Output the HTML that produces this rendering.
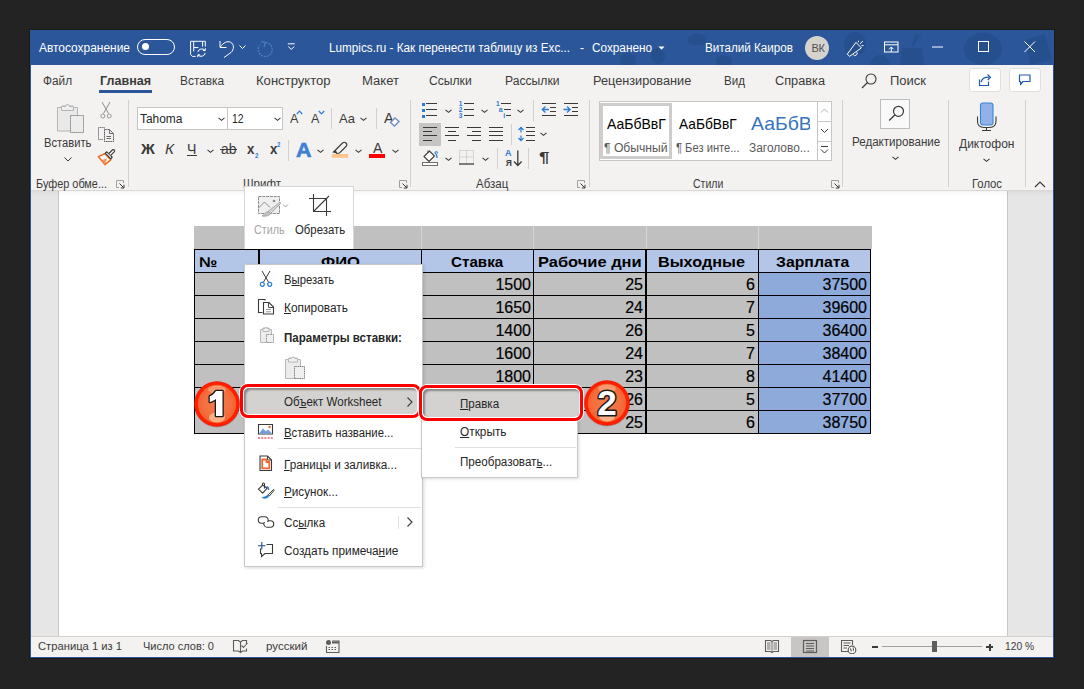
<!DOCTYPE html>
<html><head><meta charset="utf-8"><style>
html,body{margin:0;padding:0;width:1084px;height:689px;overflow:hidden;background:#232323}
body{position:relative;font-family:'Liberation Sans',sans-serif}
</style></head><body>
<div style="position:absolute;left:29px;top:29px;width:1026px;height:630px;background:#1c1b1a"></div>
<div style="position:absolute;left:30px;top:30px;width:1024px;height:628px;background:#2b579a"></div>
<div style="position:absolute;left:31px;top:65px;width:1022px;height:126px;background:#f3f2f1"></div>
<div style="position:absolute;left:31px;top:191px;width:1022px;height:445px;background:#e6e6e6"></div>
<div style="position:absolute;left:58px;top:191px;width:950px;height:445px;background:#ffffff;border-left:1px solid #c6c6c6;border-right:1px solid #c6c6c6;box-sizing:border-box"></div>
<div style="position:absolute;left:31px;top:190px;width:1022px;height:1px;background:#d9d8d7"></div>
<div style="position:absolute;left:31px;top:191px;width:1022px;height:5px;background:linear-gradient(rgba(0,0,0,0.045),rgba(0,0,0,0))"></div>
<div style="position:absolute;left:31px;top:636px;width:1022px;height:21px;background:#f3f2f1;border-top:1px solid #d2d0ce;box-sizing:border-box"></div>
<svg style="position:absolute;left:600px;top:30px;" width="454" height="35" viewBox="0 0 454 35"><g fill="#264f8e"><ellipse cx="28" cy="30" rx="8" ry="7"/><ellipse cx="58" cy="26" rx="7" ry="8"/><path d="M88 8C92 2 104 2 106 8C108 14 100 16 97 15C92 16 86 14 88 8Z"/><ellipse cx="124" cy="31" rx="8" ry="6"/><path d="M150 35V14C150 8 156 6 162 7C170 6 174 9 173 15L172 35Z" fill="none" stroke="{DC}" stroke-width="3"/><path d="M192 35V8C192 2 200 0 214 0C232 0 238 4 237 10L236 35Z" fill="none" stroke="{DC}" stroke-width="4"/><ellipse cx="255" cy="14" rx="11" ry="12"/><path d="M270 35A10 10 0 0 1 290 35Z"/><path d="M300 35L302 18H322L324 35Z M312 18L314 5L322 4" stroke="{DC}" stroke-width="2"/><ellipse cx="383" cy="19" rx="19" ry="16"/><path d="M425 10L445 4L452 30L430 35Z"/></g></svg>
<div style="position:absolute;left:39px;top:41.84px;font-family:'Liberation Sans',sans-serif;font-size:12px;line-height:12px;font-weight:400;color:#ffffff;white-space:pre;transform:scaleX(0.9947);transform-origin:0 0;">Автосохранение</div>
<div style="position:absolute;left:137px;top:39px;width:38px;height:16px;border:1px solid #fff;border-radius:9px;box-sizing:border-box"></div>
<div style="position:absolute;left:141.5px;top:43.3px;width:7.2px;height:7.2px;background:#fff;border-radius:50%"></div>
<div style="position:absolute;left:329px;top:41.84px;font-family:'Liberation Sans',sans-serif;font-size:12px;line-height:12px;font-weight:400;color:#ffffff;white-space:pre;transform:scaleX(0.9766);transform-origin:0 0;">Lumpics.ru - Как перенести таблицу из Exc...</div>
<div style="position:absolute;left:580px;top:41.84px;font-family:'Liberation Sans',sans-serif;font-size:12px;line-height:12px;font-weight:400;color:#ffffff;white-space:pre;">-</div>
<div style="position:absolute;left:592px;top:41.84px;font-family:'Liberation Sans',sans-serif;font-size:12px;line-height:12px;font-weight:400;color:#ffffff;white-space:pre;transform:scaleX(0.9811);transform-origin:0 0;">Сохранено</div>
<svg style="position:absolute;left:658px;top:46px;" width="7" height="5" viewBox="0 0 7 5"><path d="M0.5 0.5H6.5L3.5 3.8Z" fill="#fff"/></svg>
<div style="position:absolute;left:705px;top:42.34px;font-family:'Liberation Sans',sans-serif;font-size:12px;line-height:12px;font-weight:400;color:#ffffff;white-space:pre;transform:scaleX(0.9715);transform-origin:0 0;">Виталий Каиров</div>
<div style="position:absolute;left:805px;top:36px;width:24px;height:24px;background:#d6d3cf;border-radius:50%"></div>
<div style="position:absolute;left:811.5px;top:42.69px;font-family:'Liberation Sans',sans-serif;font-size:11px;line-height:11px;font-weight:400;color:#505050;white-space:pre;">В</div>
<div style="position:absolute;left:818.5px;top:42.69px;font-family:'Liberation Sans',sans-serif;font-size:11px;line-height:11px;font-weight:400;color:#505050;white-space:pre;">К</div>
<svg style="position:absolute;left:186px;top:38px;" width="24" height="22" viewBox="0 0 24 22"><path stroke="#fff" fill="none" stroke-width="1" stroke-width="1.1" d="M19.3 8.6V3.3H4.6V16.5L6.5 18.4H9.6M7.7 3.3V9.6H12.4M16.6 3.3V8.6M7.7 9.6V13.4"/><path stroke="#fff" fill="none" stroke-width="1" stroke-width="1.1" d="M11.8 14A4.2 4.2 0 0 1 19 12.3M19.3 10.2V12.6H16.9M19.2 15A4.2 4.2 0 0 1 12 17M11.8 19.2V16.8H14.2"/></svg>
<svg style="position:absolute;left:219px;top:40px;" width="16" height="18" viewBox="0 0 16 18"><path stroke="#fff" fill="none" stroke-width="1" d="M1 1V7.5H7.5"/><path stroke="#fff" fill="none" stroke-width="1" d="M1.5 7C4 2.5 8.5 0.8 11.5 2.2C15.5 4.2 15.2 9.5 12 12.5L5 17.5"/></svg>
<svg style="position:absolute;left:239px;top:45px;" width="8" height="5" viewBox="0 0 8 5"><path stroke="#fff" fill="none" stroke-width="1" d="M0.5 0.5L3.5 3.5L6.5 0.5"/></svg>
<svg style="position:absolute;left:256px;top:40px;" width="18" height="18" viewBox="0 0 18 18"><path stroke="#4f7fc6" fill="none" stroke-width="1.2" stroke-dasharray="2 1" d="M9.5 2.5A7 7 0 1 1 3.5 5.5"/><path stroke="#4f7fc6" fill="none" stroke-width="1.2" d="M5 1.5L9.5 2.5L8 7"/></svg>
<svg style="position:absolute;left:287px;top:42px;" width="9" height="9" viewBox="0 0 9 9"><path stroke="#fff" fill="none" stroke-width="1" d="M0.8 1.8H7.8M1.3 4.6L4.3 7.3L7.3 4.6"/></svg>
<svg style="position:absolute;left:845px;top:39px;" width="20" height="20" viewBox="0 0 20 20"><path stroke="#fff" fill="none" stroke-width="1" stroke-width="1.3" stroke-linejoin="round" d="M11 3.4L16.4 8.9L4.5 17.4L2.3 15.1Z"/><path stroke="#fff" fill="none" stroke-width="1" stroke-width="1.2" d="M8.2 15.6A2 2 0 0 0 11.8 13.2"/><path stroke="#fff" fill="none" stroke-width="1" stroke-width="1.1" d="M13.4 1.8V3.3M15.2 4.8L17.8 2.1M16.5 6.6H18.5"/></svg>
<svg style="position:absolute;left:884px;top:41px;" width="15" height="12" viewBox="0 0 15 12"><rect stroke="#fff" fill="none" stroke-width="1" x="0.5" y="1" width="13.5" height="10"/><path stroke="#fff" fill="none" stroke-width="1" d="M0.5 3.8H14M7.3 11V6M5 8.3L7.3 6L9.6 8.3"/></svg>
<svg style="position:absolute;left:932px;top:46px;" width="12" height="2" viewBox="0 0 12 2"><rect x="0" y="0.5" width="11" height="1" fill="#fff"/></svg>
<svg style="position:absolute;left:978px;top:41px;" width="12" height="12" viewBox="0 0 12 12"><rect stroke="#fff" fill="none" stroke-width="1" x="0.5" y="0.5" width="10" height="10"/></svg>
<svg style="position:absolute;left:1024px;top:41px;" width="12" height="12" viewBox="0 0 12 12"><path stroke="#fff" fill="none" stroke-width="1" d="M0.5 0.5L11 11M11 0.5L0.5 11"/></svg>
<div style="position:absolute;left:43.3px;top:74.72px;font-family:'Liberation Sans',sans-serif;font-size:12.5px;line-height:12.5px;font-weight:400;color:#3b3a39;white-space:pre;transform:scaleX(0.9468);transform-origin:0 0;">Файл</div>
<div style="position:absolute;left:99.7px;top:74.72px;font-family:'Liberation Sans',sans-serif;font-size:12.5px;line-height:12.5px;font-weight:700;color:#3b3a39;white-space:pre;transform:scaleX(1.0050);transform-origin:0 0;">Главная</div>
<div style="position:absolute;left:180.4px;top:74.72px;font-family:'Liberation Sans',sans-serif;font-size:12.5px;line-height:12.5px;font-weight:400;color:#3b3a39;white-space:pre;transform:scaleX(0.9512);transform-origin:0 0;">Вставка</div>
<div style="position:absolute;left:255.8px;top:74.72px;font-family:'Liberation Sans',sans-serif;font-size:12.5px;line-height:12.5px;font-weight:400;color:#3b3a39;white-space:pre;transform:scaleX(1.0466);transform-origin:0 0;">Конструктор</div>
<div style="position:absolute;left:362px;top:74.72px;font-family:'Liberation Sans',sans-serif;font-size:12.5px;line-height:12.5px;font-weight:400;color:#3b3a39;white-space:pre;transform:scaleX(1.0455);transform-origin:0 0;">Макет</div>
<div style="position:absolute;left:429px;top:74.72px;font-family:'Liberation Sans',sans-serif;font-size:12.5px;line-height:12.5px;font-weight:400;color:#3b3a39;white-space:pre;transform:scaleX(0.9701);transform-origin:0 0;">Ссылки</div>
<div style="position:absolute;left:505px;top:74.72px;font-family:'Liberation Sans',sans-serif;font-size:12.5px;line-height:12.5px;font-weight:400;color:#3b3a39;white-space:pre;transform:scaleX(0.9713);transform-origin:0 0;">Рассылки</div>
<div style="position:absolute;left:593.3px;top:74.72px;font-family:'Liberation Sans',sans-serif;font-size:12.5px;line-height:12.5px;font-weight:400;color:#3b3a39;white-space:pre;transform:scaleX(1.0183);transform-origin:0 0;">Рецензирование</div>
<div style="position:absolute;left:724px;top:74.72px;font-family:'Liberation Sans',sans-serif;font-size:12.5px;line-height:12.5px;font-weight:400;color:#3b3a39;white-space:pre;transform:scaleX(0.9282);transform-origin:0 0;">Вид</div>
<div style="position:absolute;left:775px;top:74.72px;font-family:'Liberation Sans',sans-serif;font-size:12.5px;line-height:12.5px;font-weight:400;color:#3b3a39;white-space:pre;transform:scaleX(1.0194);transform-origin:0 0;">Справка</div>
<div style="position:absolute;left:890px;top:74.72px;font-family:'Liberation Sans',sans-serif;font-size:12.5px;line-height:12.5px;font-weight:400;color:#3b3a39;white-space:pre;transform:scaleX(1.0392);transform-origin:0 0;">Поиск</div>
<div style="position:absolute;left:99px;top:90px;width:53px;height:3px;background:#2b579a"></div>
<svg style="position:absolute;left:860px;top:72px;" width="18" height="18" viewBox="0 0 18 18"><circle cx="11" cy="7" r="5" stroke="#3b3a39" stroke-width="1.1" fill="none"/><path d="M7.5 10.5L2 16" stroke="#3b3a39" stroke-width="1.2"/></svg>
<div style="position:absolute;left:969px;top:68px;width:32px;height:24px;background:#fff;border:1px solid #e1dfdd;border-radius:3px;box-sizing:border-box"></div>
<div style="position:absolute;left:1009px;top:68px;width:32px;height:24px;background:#fff;border:1px solid #e1dfdd;border-radius:3px;box-sizing:border-box"></div>
<svg style="position:absolute;left:978px;top:72px;" width="14" height="15" viewBox="0 0 14 15"><path d="M1.5 7.5V13.5H10.5V9.5" stroke="#1e5aa8" stroke-width="1.2" fill="none"/><path d="M3 10C4 6.5 7 5 11.5 5.2" stroke="#1e5aa8" stroke-width="1.2" fill="none"/><path d="M9.5 2.5L12.5 5.2L9.8 8" stroke="#1e5aa8" stroke-width="1.2" fill="none"/></svg>
<svg style="position:absolute;left:1018px;top:74px;" width="14" height="12" viewBox="0 0 14 12"><path d="M1.5 1H12V7.5H5L2.5 10.5V7.5H1.5Z" stroke="#1e5aa8" stroke-width="1.2" fill="none" stroke-linejoin="round"/></svg>
<div style="position:absolute;left:44.4px;top:137.44px;font-family:'Liberation Sans',sans-serif;font-size:12px;line-height:12px;font-weight:400;color:#3b3a39;white-space:pre;transform:scaleX(0.9317);transform-origin:0 0;">Вставить</div>
<div style="position:absolute;left:35.5px;top:177.74px;font-family:'Liberation Sans',sans-serif;font-size:12px;line-height:12px;font-weight:400;color:#3b3a39;white-space:pre;transform:scaleX(0.9073);transform-origin:0 0;">Буфер обме...</div>
<div style="position:absolute;left:243px;top:177.74px;font-family:'Liberation Sans',sans-serif;font-size:12px;line-height:12px;font-weight:400;color:#3b3a39;white-space:pre;transform:scaleX(0.9624);transform-origin:0 0;">Шрифт</div>
<div style="position:absolute;left:476px;top:177.74px;font-family:'Liberation Sans',sans-serif;font-size:12px;line-height:12px;font-weight:400;color:#3b3a39;white-space:pre;transform:scaleX(0.9593);transform-origin:0 0;">Абзац</div>
<div style="position:absolute;left:692.7px;top:177.74px;font-family:'Liberation Sans',sans-serif;font-size:12px;line-height:12px;font-weight:400;color:#3b3a39;white-space:pre;transform:scaleX(0.8763);transform-origin:0 0;">Стили</div>
<div style="position:absolute;left:851.6px;top:136.34px;font-family:'Liberation Sans',sans-serif;font-size:12px;line-height:12px;font-weight:400;color:#3b3a39;white-space:pre;transform:scaleX(0.9648);transform-origin:0 0;">Редактирование</div>
<div style="position:absolute;left:959px;top:138.34px;font-family:'Liberation Sans',sans-serif;font-size:12px;line-height:12px;font-weight:400;color:#3b3a39;white-space:pre;transform:scaleX(1.0011);transform-origin:0 0;">Диктофон</div>
<div style="position:absolute;left:972px;top:177.74px;font-family:'Liberation Sans',sans-serif;font-size:12px;line-height:12px;font-weight:400;color:#3b3a39;white-space:pre;transform:scaleX(0.9398);transform-origin:0 0;">Голос</div>
<svg style="position:absolute;left:56px;top:102px;" width="29" height="32" viewBox="0 0 29 32"><path d="M1.5 5.5H6V4H17V5.5H21.5V29H1.5Z" fill="#e9e9e9" stroke="#b4b4b4"/><path d="M5.5 8.5V4.5H9.5A2 2 0 0 1 13.5 4.5H17.5V8.5Z" fill="#efefef" stroke="#b4b4b4"/><rect x="14.5" y="13.5" width="13" height="17" fill="#ececec" stroke="#6e6e6e" stroke-dasharray="1.2 0.8"/></svg>
<svg style="position:absolute;left:100px;top:101px;" width="12" height="18" viewBox="0 0 12 18"><path d="M2 1L8.5 12.5M10 1L3.5 12.5" stroke="#8f8f8f" fill="none"/><circle cx="2.8" cy="15" r="2" fill="none" stroke="#9a9a9a"/><circle cx="9.2" cy="15" r="2" fill="none" stroke="#9a9a9a"/></svg>
<svg style="position:absolute;left:97px;top:125px;" width="18" height="18" viewBox="0 0 18 18"><path d="M7.5 3.5V2.5H1.5V14.5H6.5" fill="none" stroke="#5a5a5a" stroke-dasharray="1.2 0.8"/><path d="M7.5 4.5H12.5L16.5 8.5V16.5H7.5Z" fill="#f0f0f0" stroke="#4a4a4a" stroke-dasharray="1.2 0.6"/><path d="M12.5 4.5V8.5H16.5M9.5 11.5H14M9.5 13.5H14" fill="none" stroke="#6a6a6a"/></svg>
<svg style="position:absolute;left:94px;top:146px;" width="22" height="22" viewBox="0 0 22 22"><path d="M4.3 10.6L10.8 7.8L16.8 13.8L10.9 18.6Z" fill="#fff" stroke="#f26b21" stroke-width="1.5" stroke-linejoin="round"/><path d="M7.5 14L13 12.5L10.9 18.6Z" fill="#f7915a"/><path d="M11.2 7.2L12.8 5.8L18.2 11.2L16.8 12.8Z" fill="#fff" stroke="#3b3a39" stroke-width="1.2" stroke-linejoin="round"/><path d="M14.8 7.6L18.6 3.8A1.3 1.3 0 0 1 20.4 5.6L16.6 9.4" fill="#fff" stroke="#3b3a39" stroke-width="1.2"/></svg>
<svg style="position:absolute;left:64px;top:157px;" width="8" height="5" viewBox="0 0 8 5"><path d="M0.5 0.5L4 4L7.5 0.5" stroke="#3b3a39" fill="none"/></svg>
<svg style="position:absolute;left:116px;top:180px;" width="9" height="9" viewBox="0 0 9 9"><path d="M7.5 3V0.5H0.5V7.5H3" fill="none" stroke="#a19f9d" stroke-width="1"/><path d="M3.5 3.5L8 8M4.8 8H8V4.8" fill="none" stroke="#3b3a39"/></svg>
<div style="position:absolute;left:137px;top:107px;width:91px;height:23px;background:#fff;border:1px solid #c8c6c4;box-sizing:border-box"></div>
<div style="position:absolute;left:227px;top:107px;width:56px;height:23px;background:#fff;border:1px solid #c8c6c4;box-sizing:border-box"></div>
<div style="position:absolute;left:140px;top:112.74px;font-family:'Liberation Sans',sans-serif;font-size:12px;line-height:12px;font-weight:400;color:#262626;white-space:pre;transform:scaleX(0.9929);transform-origin:0 0;">Tahoma</div>
<div style="position:absolute;left:231.5px;top:112.74px;font-family:'Liberation Sans',sans-serif;font-size:12px;line-height:12px;font-weight:400;color:#262626;white-space:pre;transform:scaleX(0.8608);transform-origin:0 0;">12</div>
<svg style="position:absolute;left:218px;top:117px;" width="7" height="5" viewBox="0 0 7 5"><path d="M0.5 0.8L3.5 3.3L6.5 0.8" stroke="#3b3a39" fill="none" stroke-width="1.1"/></svg>
<svg style="position:absolute;left:273.5px;top:117px;" width="7" height="5" viewBox="0 0 7 5"><path d="M0.5 0.8L3.5 3.3L6.5 0.8" stroke="#3b3a39" fill="none" stroke-width="1.1"/></svg>
<div style="position:absolute;left:289.6px;top:111.80px;font-family:'Liberation Sans',sans-serif;font-size:13px;line-height:13px;font-weight:400;color:#3b3a39;white-space:pre;transform:scaleX(0.9686);transform-origin:0 0;">A</div>
<svg style="position:absolute;left:296px;top:110px;" width="7" height="5" viewBox="0 0 7 5"><path d="M0.8 4L3.5 1.2L6.2 4" stroke="#2b7cd3" fill="none" stroke-width="1.2"/></svg>
<div style="position:absolute;left:311.3px;top:111.80px;font-family:'Liberation Sans',sans-serif;font-size:13px;line-height:13px;font-weight:400;color:#3b3a39;white-space:pre;transform:scaleX(0.9686);transform-origin:0 0;">A</div>
<svg style="position:absolute;left:318px;top:110px;" width="7" height="5" viewBox="0 0 7 5"><path d="M0.8 1L3.5 3.8L6.2 1" stroke="#2b7cd3" fill="none" stroke-width="1.2"/></svg>
<div style="position:absolute;left:331px;top:108px;width:1px;height:21px;background:#d2d0ce"></div>
<div style="position:absolute;left:339.2px;top:111.80px;font-family:'Liberation Sans',sans-serif;font-size:13px;line-height:13px;font-weight:400;color:#3b3a39;white-space:pre;transform:scaleX(0.9996);transform-origin:0 0;">Aa</div>
<svg style="position:absolute;left:359.5px;top:116.5px;" width="7" height="5" viewBox="0 0 7 5"><path d="M0.5 0.8L3.5 3.3L6.5 0.8" stroke="#3b3a39" fill="none" stroke-width="1.1"/></svg>
<div style="position:absolute;left:376px;top:108px;width:1px;height:21px;background:#d2d0ce"></div>
<div style="position:absolute;left:384.2px;top:110.53px;font-family:'Liberation Sans',sans-serif;font-size:14.5px;line-height:14.5px;font-weight:400;color:#3b3a39;white-space:pre;transform:scaleX(0.9926);transform-origin:0 0;">A</div>
<svg style="position:absolute;left:389px;top:116px;" width="12" height="11" viewBox="0 0 12 11"><path d="M1.5 6.5L6 2L10 5.5L5.5 10Z" fill="#fff" stroke="#6d8fc4" stroke-width="1.4"/></svg>
<div style="position:absolute;left:141px;top:141.20px;font-family:'Liberation Sans',sans-serif;font-size:15px;line-height:15px;font-weight:700;color:#3b3a39;white-space:pre;transform:scaleX(1.0175);transform-origin:0 0;">Ж</div>
<div style="position:absolute;left:165.4px;top:141.20px;font-family:'Liberation Sans',sans-serif;font-size:15px;line-height:15px;font-weight:400;color:#3b3a39;white-space:pre;transform:scaleX(1.0171);transform-origin:0 0;font-style:italic">К</div>
<div style="position:absolute;left:187.3px;top:142.05px;font-family:'Liberation Sans',sans-serif;font-size:14px;line-height:14px;font-weight:400;color:#3b3a39;white-space:pre;transform:scaleX(1.0060);transform-origin:0 0;">Ч</div>
<div style="position:absolute;left:187px;top:155px;width:10px;height:1.2px;background:#3b3a39"></div>
<svg style="position:absolute;left:206.5px;top:148.5px;" width="7" height="5" viewBox="0 0 7 5"><path d="M0.5 0.8L3.5 3.3L6.5 0.8" stroke="#3b3a39" fill="none" stroke-width="1.1"/></svg>
<div style="position:absolute;left:221.2px;top:142.05px;font-family:'Liberation Sans',sans-serif;font-size:14px;line-height:14px;font-weight:400;color:#3b3a39;white-space:pre;transform:scaleX(0.9886);transform-origin:0 0;">ab</div>
<div style="position:absolute;left:220px;top:149px;width:17px;height:1.2px;background:#3b3a39"></div>
<div style="position:absolute;left:247.3px;top:142.05px;font-family:'Liberation Sans',sans-serif;font-size:14px;line-height:14px;font-weight:700;color:#3b3a39;white-space:pre;transform:scaleX(0.9491);transform-origin:0 0;">x</div>
<div style="position:absolute;left:255.2px;top:151.97px;font-family:'Liberation Sans',sans-serif;font-size:7px;line-height:7px;font-weight:700;color:#2b7cd3;white-space:pre;transform:scaleX(0.8704);transform-origin:0 0;">2</div>
<div style="position:absolute;left:269.5px;top:142.05px;font-family:'Liberation Sans',sans-serif;font-size:14px;line-height:14px;font-weight:700;color:#3b3a39;white-space:pre;transform:scaleX(0.9491);transform-origin:0 0;">x</div>
<div style="position:absolute;left:276.9px;top:141.07px;font-family:'Liberation Sans',sans-serif;font-size:7px;line-height:7px;font-weight:700;color:#2b7cd3;white-space:pre;transform:scaleX(0.8704);transform-origin:0 0;">2</div>
<div style="position:absolute;left:288px;top:140px;width:1px;height:21px;background:#d2d0ce"></div>
<div style="position:absolute;left:296.1px;top:139.57px;font-family:'Liberation Sans',sans-serif;font-size:20px;line-height:20px;font-weight:700;color:#3d80d6;white-space:pre;transform:scaleX(1.0724);transform-origin:0 0;-webkit-text-stroke:0.6px #3d80d6">A</div>
<svg style="position:absolute;left:316.5px;top:148.8px;" width="7" height="5" viewBox="0 0 7 5"><path d="M0.5 0.8L3.5 3.3L6.5 0.8" stroke="#3b3a39" fill="none" stroke-width="1.1"/></svg>
<svg style="position:absolute;left:331px;top:141px;" width="18" height="17" viewBox="0 0 18 17"><path d="M2.5 11L5 8.5L11.5 2C12.5 1 14 1 15 2C16 3 16 4.5 15 5.5L8.5 12L6 12.5L4.5 11Z" fill="none" stroke="#3b3a39" stroke-width="1.1"/><path d="M5 9L2.5 11.5L6 12.5Z" fill="#3b3a39"/><rect x="0.8" y="13" width="16.3" height="3.8" fill="#fcc38a"/></svg>
<svg style="position:absolute;left:354.7px;top:148.8px;" width="7" height="5" viewBox="0 0 7 5"><path d="M0.5 0.8L3.5 3.3L6.5 0.8" stroke="#3b3a39" fill="none" stroke-width="1.1"/></svg>
<div style="position:absolute;left:372.5px;top:140.75px;font-family:'Liberation Sans',sans-serif;font-size:14px;line-height:14px;font-weight:400;color:#3b3a39;white-space:pre;transform:scaleX(1.0060);transform-origin:0 0;">A</div>
<div style="position:absolute;left:368.8px;top:154px;width:16.2px;height:3.8px;background:#ff0000"></div>
<svg style="position:absolute;left:391.5px;top:148.8px;" width="7" height="5" viewBox="0 0 7 5"><path d="M0.5 0.8L3.5 3.3L6.5 0.8" stroke="#3b3a39" fill="none" stroke-width="1.1"/></svg>
<svg style="position:absolute;left:399px;top:180px;" width="9" height="9" viewBox="0 0 9 9"><path d="M7.5 3V0.5H0.5V7.5H3" fill="none" stroke="#a19f9d" stroke-width="1"/><path d="M3.5 3.5L8 8M4.8 8H8V4.8" fill="none" stroke="#3b3a39"/></svg>
<div style="position:absolute;left:128px;top:100px;width:1px;height:87px;background:#d2d0ce"></div>
<div style="position:absolute;left:410px;top:100px;width:1px;height:87px;background:#d2d0ce"></div>
<div style="position:absolute;left:589px;top:100px;width:1px;height:87px;background:#d2d0ce"></div>
<div style="position:absolute;left:842px;top:100px;width:1px;height:87px;background:#d2d0ce"></div>
<div style="position:absolute;left:948px;top:100px;width:1px;height:87px;background:#d2d0ce"></div>
<div style="position:absolute;left:1025px;top:100px;width:1px;height:87px;background:#d2d0ce"></div>
<div style="position:absolute;left:422px;top:102.5px;width:3px;height:3px;background:#2b7cd3"></div>
<div style="position:absolute;left:426px;top:103px;width:11px;height:1px;background:#3b3a39"></div>
<div style="position:absolute;left:422px;top:108.5px;width:3px;height:3px;background:#2b7cd3"></div>
<div style="position:absolute;left:426px;top:109px;width:11px;height:1px;background:#3b3a39"></div>
<div style="position:absolute;left:422px;top:114.5px;width:3px;height:3px;background:#2b7cd3"></div>
<div style="position:absolute;left:426px;top:115px;width:11px;height:1px;background:#3b3a39"></div>
<svg style="position:absolute;left:444.5px;top:108.5px;" width="7" height="5" viewBox="0 0 7 5"><path d="M0.5 0.8L3.5 3.3L6.5 0.8" stroke="#3b3a39" fill="none" stroke-width="1.1"/></svg>
<div style="position:absolute;left:458.8px;top:100.70px;font-family:'Liberation Sans',sans-serif;font-size:6.5px;line-height:6.5px;font-weight:700;color:#2b7cd3;white-space:pre;">1</div>
<div style="position:absolute;left:464px;top:103px;width:10px;height:1px;background:#3b3a39"></div>
<div style="position:absolute;left:458.8px;top:106.70px;font-family:'Liberation Sans',sans-serif;font-size:6.5px;line-height:6.5px;font-weight:700;color:#2b7cd3;white-space:pre;">2</div>
<div style="position:absolute;left:464px;top:109px;width:10px;height:1px;background:#3b3a39"></div>
<div style="position:absolute;left:458.8px;top:112.70px;font-family:'Liberation Sans',sans-serif;font-size:6.5px;line-height:6.5px;font-weight:700;color:#2b7cd3;white-space:pre;">3</div>
<div style="position:absolute;left:464px;top:115px;width:10px;height:1px;background:#3b3a39"></div>
<svg style="position:absolute;left:481.3px;top:108.5px;" width="7" height="5" viewBox="0 0 7 5"><path d="M0.5 0.8L3.5 3.3L6.5 0.8" stroke="#3b3a39" fill="none" stroke-width="1.1"/></svg>
<div style="position:absolute;left:496px;top:100.70px;font-family:'Liberation Sans',sans-serif;font-size:6.5px;line-height:6.5px;font-weight:700;color:#2b7cd3;white-space:pre;">1</div>
<div style="position:absolute;left:501px;top:103px;width:10px;height:1px;background:#3b3a39"></div>
<div style="position:absolute;left:498.8px;top:106.27px;font-family:'Liberation Sans',sans-serif;font-size:7px;line-height:7px;font-weight:700;color:#2b7cd3;white-space:pre;">a</div>
<div style="position:absolute;left:504px;top:109px;width:7px;height:1px;background:#3b3a39"></div>
<div style="position:absolute;left:503.2px;top:112.27px;font-family:'Liberation Sans',sans-serif;font-size:7px;line-height:7px;font-weight:700;color:#2b7cd3;white-space:pre;">i</div>
<div style="position:absolute;left:506px;top:115px;width:5px;height:1px;background:#3b3a39"></div>
<svg style="position:absolute;left:516.5px;top:108.5px;" width="7" height="5" viewBox="0 0 7 5"><path d="M0.5 0.8L3.5 3.3L6.5 0.8" stroke="#3b3a39" fill="none" stroke-width="1.1"/></svg>
<div style="position:absolute;left:533px;top:100px;width:1px;height:21px;background:#d2d0ce"></div>
<div style="position:absolute;left:542px;top:103px;width:14px;height:1px;background:#3b3a39"></div>
<div style="position:absolute;left:550px;top:107px;width:6px;height:1px;background:#3b3a39"></div>
<div style="position:absolute;left:550px;top:111px;width:6px;height:1px;background:#3b3a39"></div>
<div style="position:absolute;left:542px;top:115px;width:14px;height:1px;background:#3b3a39"></div>
<svg style="position:absolute;left:541px;top:105px;" width="9" height="9" viewBox="0 0 9 9"><path d="M8 4.5H1.5M4.5 1.5L1.3 4.5L4.5 7.5" stroke="#2b7cd3" stroke-width="1.3" fill="none"/></svg>
<div style="position:absolute;left:564px;top:103px;width:14px;height:1px;background:#3b3a39"></div>
<div style="position:absolute;left:572px;top:107px;width:6px;height:1px;background:#3b3a39"></div>
<div style="position:absolute;left:572px;top:111px;width:6px;height:1px;background:#3b3a39"></div>
<div style="position:absolute;left:564px;top:115px;width:14px;height:1px;background:#3b3a39"></div>
<svg style="position:absolute;left:563px;top:105px;" width="9" height="9" viewBox="0 0 9 9"><path d="M0.5 4.5H7M4 1.5L7.2 4.5L4 7.5" stroke="#2b7cd3" stroke-width="1.3" fill="none"/></svg>
<div style="position:absolute;left:419px;top:123px;width:22px;height:23px;background:#c6c5c3"></div>
<div style="position:absolute;left:423px;top:127px;width:14px;height:1px;background:#3b3a39"></div>
<div style="position:absolute;left:423px;top:131px;width:9px;height:1px;background:#3b3a39"></div>
<div style="position:absolute;left:423px;top:135px;width:14px;height:1px;background:#3b3a39"></div>
<div style="position:absolute;left:423px;top:140px;width:9px;height:1px;background:#3b3a39"></div>
<div style="position:absolute;left:445px;top:127px;width:14px;height:1px;background:#3b3a39"></div>
<div style="position:absolute;left:448px;top:131px;width:8px;height:1px;background:#3b3a39"></div>
<div style="position:absolute;left:445px;top:135px;width:14px;height:1px;background:#3b3a39"></div>
<div style="position:absolute;left:448px;top:140px;width:8px;height:1px;background:#3b3a39"></div>
<div style="position:absolute;left:467px;top:127px;width:14px;height:1px;background:#3b3a39"></div>
<div style="position:absolute;left:472px;top:131px;width:9px;height:1px;background:#3b3a39"></div>
<div style="position:absolute;left:467px;top:135px;width:14px;height:1px;background:#3b3a39"></div>
<div style="position:absolute;left:472px;top:140px;width:9px;height:1px;background:#3b3a39"></div>
<div style="position:absolute;left:489px;top:127px;width:14px;height:1px;background:#3b3a39"></div>
<div style="position:absolute;left:489px;top:131px;width:14px;height:1px;background:#3b3a39"></div>
<div style="position:absolute;left:489px;top:135px;width:14px;height:1px;background:#3b3a39"></div>
<div style="position:absolute;left:489px;top:140px;width:14px;height:1px;background:#3b3a39"></div>
<div style="position:absolute;left:511px;top:124px;width:1px;height:21px;background:#d2d0ce"></div>
<svg style="position:absolute;left:517px;top:126px;" width="8" height="16" viewBox="0 0 8 16"><path d="M4 1.5V6.5M4 9.5V14.5M1.5 4L4 1.3L6.5 4M1.5 12L4 14.7L6.5 12" stroke="#2b7cd3" stroke-width="1.2" fill="none"/></svg>
<div style="position:absolute;left:526px;top:127px;width:9px;height:1px;background:#3b3a39"></div>
<div style="position:absolute;left:526px;top:131px;width:9px;height:1px;background:#3b3a39"></div>
<div style="position:absolute;left:526px;top:135px;width:9px;height:1px;background:#3b3a39"></div>
<div style="position:absolute;left:526px;top:140px;width:9px;height:1px;background:#3b3a39"></div>
<svg style="position:absolute;left:539.8px;top:132.3px;" width="7" height="5" viewBox="0 0 7 5"><path d="M0.5 0.8L3.5 3.3L6.5 0.8" stroke="#3b3a39" fill="none" stroke-width="1.1"/></svg>
<svg style="position:absolute;left:421px;top:149px;" width="18" height="18" viewBox="0 0 18 18"><path d="M3 7.5L8.5 2L13.5 7L8 12.5Z" fill="#fff" stroke="#3b3a39" stroke-width="1.1"/><path d="M7 3.5V1.5" stroke="#3b3a39"/><path d="M13.5 3.5C15.5 4.5 16 6 16 9" stroke="#2b7cd3" stroke-width="1.3" fill="none"/><path d="M14 3.2L16 2.5L16.5 4.5" stroke="#2b7cd3" fill="none"/><rect x="1.5" y="13.5" width="15" height="3" fill="#fff" stroke="#6e6e6e"/></svg>
<svg style="position:absolute;left:444.5px;top:156.8px;" width="7" height="5" viewBox="0 0 7 5"><path d="M0.5 0.8L3.5 3.3L6.5 0.8" stroke="#3b3a39" fill="none" stroke-width="1.1"/></svg>
<svg style="position:absolute;left:458px;top:149px;" width="17" height="17" viewBox="0 0 17 17"><path d="M1.5 1.5H15.5V14.5M1.5 1.5V14.5M8.5 1.5V14.5M1.5 8H15.5" stroke="#b8b8b8" fill="none" stroke-dasharray="1 1"/><path d="M1 15H16" stroke="#3b3a39" stroke-width="1.3"/></svg>
<svg style="position:absolute;left:481.6px;top:156.8px;" width="7" height="5" viewBox="0 0 7 5"><path d="M0.5 0.8L3.5 3.3L6.5 0.8" stroke="#3b3a39" fill="none" stroke-width="1.1"/></svg>
<div style="position:absolute;left:497px;top:148px;width:1px;height:21px;background:#d2d0ce"></div>
<div style="position:absolute;left:505px;top:149.38px;font-family:'Liberation Sans',sans-serif;font-size:9px;line-height:9px;font-weight:700;color:#2b7cd3;white-space:pre;">A</div>
<div style="position:absolute;left:505.8px;top:158.60px;font-family:'Liberation Sans',sans-serif;font-size:8.5px;line-height:8.5px;font-weight:700;color:#3b3a39;white-space:pre;">Я</div>
<svg style="position:absolute;left:513px;top:150px;" width="10" height="17" viewBox="0 0 10 17"><path d="M4.8 0.5V15.5M1 11.5L4.8 15.5L8.6 11.5" stroke="#3b3a39" stroke-width="1.3" fill="none"/></svg>
<div style="position:absolute;left:528px;top:148px;width:1px;height:21px;background:#d2d0ce"></div>
<div style="position:absolute;left:538.7px;top:150.35px;font-family:'Liberation Sans',sans-serif;font-size:14px;line-height:14px;font-weight:700;color:#3b3a39;white-space:pre;transform:scaleX(1.3467);transform-origin:0 0;">¶</div>
<svg style="position:absolute;left:577px;top:180px;" width="9" height="9" viewBox="0 0 9 9"><path d="M7.5 3V0.5H0.5V7.5H3" fill="none" stroke="#a19f9d" stroke-width="1"/><path d="M3.5 3.5L8 8M4.8 8H8V4.8" fill="none" stroke="#3b3a39"/></svg>
<div style="position:absolute;left:599px;top:101px;width:233px;height:60px;background:#fff;border:1px solid #c8c6c4;box-sizing:border-box"></div>
<div style="position:absolute;left:600px;top:103px;width:72px;height:56px;border:3px solid #cfcdcb;box-sizing:border-box"></div>
<div style="position:absolute;left:606.8px;top:115.90px;font-family:'Liberation Sans',sans-serif;font-size:15px;line-height:15px;font-weight:400;color:#000;white-space:pre;transform:scaleX(0.9326);transform-origin:0 0;">АаБбВвГ</div>
<div style="position:absolute;left:604.4px;top:142.44px;font-family:'Liberation Sans',sans-serif;font-size:12px;line-height:12px;font-weight:400;color:#595959;white-space:pre;transform:scaleX(1.0123);transform-origin:0 0;">¶ Обычный</div>
<div style="position:absolute;left:678.7px;top:115.90px;font-family:'Liberation Sans',sans-serif;font-size:15px;line-height:15px;font-weight:400;color:#000;white-space:pre;transform:scaleX(0.9136);transform-origin:0 0;">АаБбВвГ</div>
<div style="position:absolute;left:676.4px;top:142.44px;font-family:'Liberation Sans',sans-serif;font-size:12px;line-height:12px;font-weight:400;color:#595959;white-space:pre;transform:scaleX(0.9314);transform-origin:0 0;">¶ Без инте...</div>
<div style="position:absolute;left:748px;top:108px;width:62px;height:26px;overflow:hidden"><span style="position:absolute;left:2.5px;top:5.5px;font-family:'Liberation Sans';font-size:19px;color:#3673bd;white-space:pre;line-height:19px;transform:scaleX(1.02);transform-origin:0 0;display:inline-block">АаБбВв</span></div>
<div style="position:absolute;left:748.8px;top:142.44px;font-family:'Liberation Sans',sans-serif;font-size:12px;line-height:12px;font-weight:400;color:#595959;white-space:pre;transform:scaleX(0.9923);transform-origin:0 0;">Заголово...</div>
<div style="position:absolute;left:817px;top:101px;width:15px;height:60px;border-left:1px solid #c8c6c4;box-sizing:border-box"></div>
<div style="position:absolute;left:817px;top:121px;width:15px;height:1px;background:#c8c6c4"></div>
<div style="position:absolute;left:817px;top:141px;width:15px;height:1px;background:#c8c6c4"></div>
<svg style="position:absolute;left:820px;top:108px;" width="9" height="6" viewBox="0 0 9 6"><path d="M1 4.5L4.5 1L8 4.5" stroke="#b0aeac" fill="none"/></svg>
<svg style="position:absolute;left:820px;top:128px;" width="9" height="6" viewBox="0 0 9 6"><path d="M1 1L4.5 4.5L8 1" stroke="#3b3a39" fill="none"/></svg>
<svg style="position:absolute;left:820px;top:145px;" width="9" height="10" viewBox="0 0 9 10"><path d="M1 1.5H8M1 4.5L4.5 8L8 4.5" stroke="#3b3a39" fill="none"/></svg>
<svg style="position:absolute;left:831px;top:180px;" width="9" height="9" viewBox="0 0 9 9"><path d="M7.5 3V0.5H0.5V7.5H3" fill="none" stroke="#a19f9d" stroke-width="1"/><path d="M3.5 3.5L8 8M4.8 8H8V4.8" fill="none" stroke="#3b3a39"/></svg>
<div style="position:absolute;left:880px;top:99px;width:30px;height:30px;background:#f9f9f9;border:1px solid #bdbdbd;box-sizing:border-box"></div>
<svg style="position:absolute;left:880px;top:99px;" width="30" height="30" viewBox="0 0 30 30"><circle cx="18.5" cy="12.3" r="5" stroke="#3b3a39" stroke-width="1.2" fill="none"/><path d="M15 15.8L9.2 21.5" stroke="#3b3a39" stroke-width="1.3"/></svg>
<svg style="position:absolute;left:891.5px;top:155.5px;" width="7" height="5" viewBox="0 0 7 5"><path d="M0.5 0.8L3.5 3.3L6.5 0.8" stroke="#3b3a39" fill="none" stroke-width="1.1"/></svg>
<svg style="position:absolute;left:976px;top:102px;" width="22" height="30" viewBox="0 0 22 30"><rect x="4.5" y="1" width="12.5" height="22" rx="2.5" fill="#90b2e8" stroke="#3a84d6" stroke-width="1.1"/><path d="M1.5 14.5V19C1.5 23 4 25.5 8 25.5H13.5C17.5 25.5 20 23 20 19V14.5" stroke="#3b3a39" stroke-width="1.1" fill="none"/><path d="M10.5 25.5V28.5M6 28.5H15" stroke="#3b3a39" stroke-width="1.1"/></svg>
<svg style="position:absolute;left:983px;top:158px;" width="7" height="5" viewBox="0 0 7 5"><path d="M0.5 0.8L3.5 3.3L6.5 0.8" stroke="#3b3a39" fill="none" stroke-width="1.1"/></svg>
<svg style="position:absolute;left:1034px;top:181px;" width="12" height="7" viewBox="0 0 12 7"><path d="M1 6L6 1L11 6" stroke="#3b3a39" stroke-width="1.2" fill="none"/></svg>
<div style="position:absolute;left:38.3px;top:641.07px;font-family:'Liberation Sans',sans-serif;font-size:11.5px;line-height:11.5px;font-weight:400;color:#3b3a39;white-space:pre;transform:scaleX(0.9756);transform-origin:0 0;">Страница 1 из 1</div>
<div style="position:absolute;left:143px;top:641.07px;font-family:'Liberation Sans',sans-serif;font-size:11.5px;line-height:11.5px;font-weight:400;color:#3b3a39;white-space:pre;transform:scaleX(0.9574);transform-origin:0 0;">Число слов: 0</div>
<div style="position:absolute;left:265.6px;top:641.07px;font-family:'Liberation Sans',sans-serif;font-size:11.5px;line-height:11.5px;font-weight:400;color:#3b3a39;white-space:pre;transform:scaleX(1.0029);transform-origin:0 0;">русский</div>
<div style="position:absolute;left:1004.5px;top:641.07px;font-family:'Liberation Sans',sans-serif;font-size:11.5px;line-height:11.5px;font-weight:400;color:#3b3a39;white-space:pre;transform:scaleX(0.8893);transform-origin:0 0;">120 %</div>
<div style="position:absolute;left:791px;top:637px;width:38px;height:20px;background:#c8c6c4"></div>
<div style="position:absolute;left:882px;top:646px;width:100px;height:1px;background:#a19f9d"></div>
<div style="position:absolute;left:932px;top:641px;width:5px;height:11px;background:#605e5c"></div>
<div style="position:absolute;left:872px;top:646px;width:6px;height:2px;background:#3b3a39"></div>
<div style="position:absolute;left:986px;top:646px;width:7px;height:2px;background:#3b3a39"></div>
<div style="position:absolute;left:988.5px;top:643.5px;width:2px;height:7px;background:#3b3a39"></div>
<svg style="position:absolute;left:232px;top:639px;" width="17" height="15" viewBox="0 0 17 15"><path d="M1.5 1.5H6.5L8.5 3V13.5L6.5 12H1.5Z M8.5 3L10.5 1.5H14.5V5 M14.5 9.5V12H10.5L8.5 13.5" stroke="#5f5d5b" stroke-width="1.1" fill="none"/><path d="M9.5 6.5L11.5 8.5L15.5 4" stroke="#5f5d5b" stroke-width="1.1" fill="none"/></svg>
<svg style="position:absolute;left:325px;top:639px;" width="15" height="15" viewBox="0 0 15 15"><circle cx="3.5" cy="3.5" r="2.5" fill="#5f5d5b"/><path d="M7 2H14V13.5H1.5V7" stroke="#5f5d5b" stroke-width="1.1" fill="none"/><path d="M7 3.5H14" stroke="#5f5d5b" stroke-width="2"/><path d="M3.5 8.5H5M6.5 8.5H8M9.5 8.5H11M3.5 10.5H5M6.5 10.5H8M9.5 10.5H11" stroke="#5f5d5b" stroke-width="1"/></svg>
<svg style="position:absolute;left:764px;top:639px;" width="16" height="15" viewBox="0 0 16 15"><path d="M1.5 1.5H6.5L8 2.5L9.5 1.5H14.5V12.5H9.5L8 13.5L6.5 12.5H1.5Z" stroke="#5f5d5b" stroke-width="1.1" fill="none"/><path d="M8 2.5V13.5M3 4H6.5M3 6H6.5M3 8H6.5M3 10H6.5M9.5 4H13M9.5 6H13M9.5 8H13M9.5 10H13" stroke="#5f5d5b" stroke-width="0.9"/></svg>
<svg style="position:absolute;left:802px;top:639px;" width="16" height="15" viewBox="0 0 16 15"><rect x="1.5" y="1.5" width="13" height="12" stroke="#5f5d5b" stroke-width="1.2" fill="none"/><path d="M4 4.5H12M4 7H12M4 9.5H12M4 12H12" stroke="#5f5d5b" stroke-width="1"/></svg>
<svg style="position:absolute;left:840px;top:639px;" width="17" height="15" viewBox="0 0 17 15"><path d="M8 12.5H1.5V1.5H12.5V6" stroke="#5f5d5b" stroke-width="1.1" fill="none"/><path d="M3.5 4H10.5M3.5 6.5H9M3.5 9H7" stroke="#5f5d5b" stroke-width="1"/><circle cx="12" cy="11" r="3.8" fill="#fff" stroke="#5f5d5b" stroke-width="1.2"/><path d="M10 9.5C11 10 11.5 11 11 12.5M13 8.5C13.5 9.5 14 10.5 13.2 12" stroke="#5f5d5b" stroke-width="1.1" fill="none"/></svg>
<div style="position:absolute;left:194px;top:226px;width:678px;height:23px;background:#c0c0c0"></div>
<div style="position:absolute;left:258px;top:226px;width:1px;height:23px;background:#d4d4d4"></div>
<div style="position:absolute;left:421px;top:226px;width:1px;height:23px;background:#d4d4d4"></div>
<div style="position:absolute;left:533px;top:226px;width:1px;height:23px;background:#d4d4d4"></div>
<div style="position:absolute;left:646px;top:226px;width:1px;height:23px;background:#d4d4d4"></div>
<div style="position:absolute;left:758px;top:226px;width:1px;height:23px;background:#d4d4d4"></div>
<div style="position:absolute;left:194px;top:249px;width:677px;height:23px;background:#b4c6e7"></div>
<div style="position:absolute;left:194px;top:272px;width:564px;height:161px;background:#c0c0c0"></div>
<div style="position:absolute;left:758px;top:272px;width:113px;height:161px;background:#8eaadb"></div>
<div style="position:absolute;left:194px;top:249px;width:677px;height:1px;background:#000"></div>
<div style="position:absolute;left:194px;top:272px;width:677px;height:1px;background:#000"></div>
<div style="position:absolute;left:194px;top:295px;width:677px;height:1px;background:#000"></div>
<div style="position:absolute;left:194px;top:318px;width:677px;height:1px;background:#000"></div>
<div style="position:absolute;left:194px;top:341px;width:677px;height:1px;background:#000"></div>
<div style="position:absolute;left:194px;top:364px;width:677px;height:1px;background:#000"></div>
<div style="position:absolute;left:194px;top:387px;width:677px;height:1px;background:#000"></div>
<div style="position:absolute;left:194px;top:410px;width:677px;height:1px;background:#000"></div>
<div style="position:absolute;left:194px;top:433px;width:677px;height:1px;background:#000"></div>
<div style="position:absolute;left:194px;top:249px;width:1px;height:185px;background:#000"></div>
<div style="position:absolute;left:258px;top:249px;width:2px;height:185px;background:#000"></div>
<div style="position:absolute;left:421px;top:249px;width:1px;height:185px;background:#000"></div>
<div style="position:absolute;left:533px;top:249px;width:1px;height:185px;background:#000"></div>
<div style="position:absolute;left:645px;top:249px;width:2px;height:185px;background:#000"></div>
<div style="position:absolute;left:758px;top:249px;width:1px;height:185px;background:#000"></div>
<div style="position:absolute;left:870px;top:249px;width:1px;height:185px;background:#000"></div>
<div style="position:absolute;left:198.9px;top:254.65px;font-family:'Liberation Sans',sans-serif;font-size:14px;line-height:14px;font-weight:700;color:#000;white-space:pre;transform:scaleX(1.1724);transform-origin:0 0;">№</div>
<div style="position:absolute;left:321px;top:254.65px;font-family:'Liberation Sans',sans-serif;font-size:14px;line-height:14px;font-weight:700;color:#000;white-space:pre;transform:scaleX(1.1852);transform-origin:0 0;">ФИО</div>
<div style="position:absolute;left:451.3px;top:254.65px;font-family:'Liberation Sans',sans-serif;font-size:14px;line-height:14px;font-weight:700;color:#000;white-space:pre;transform:scaleX(1.0840);transform-origin:0 0;">Ставка</div>
<div style="position:absolute;left:538.3px;top:254.65px;font-family:'Liberation Sans',sans-serif;font-size:14px;line-height:14px;font-weight:700;color:#000;white-space:pre;transform:scaleX(1.1763);transform-origin:0 0;">Рабочие дни</div>
<div style="position:absolute;left:657.6px;top:254.65px;font-family:'Liberation Sans',sans-serif;font-size:14px;line-height:14px;font-weight:700;color:#000;white-space:pre;transform:scaleX(1.1605);transform-origin:0 0;">Выходные</div>
<div style="position:absolute;left:776.2px;top:254.65px;font-family:'Liberation Sans',sans-serif;font-size:14px;line-height:14px;font-weight:700;color:#000;white-space:pre;transform:scaleX(1.1296);transform-origin:0 0;">Зарплата</div>
<div style="position:absolute;left:495.41px;top:277.46px;font-family:'Liberation Sans',sans-serif;font-size:16px;line-height:16px;font-weight:400;color:#000;white-space:pre;-webkit-text-stroke:0.2px #000">1500</div>
<div style="position:absolute;left:625.20px;top:277.46px;font-family:'Liberation Sans',sans-serif;font-size:16px;line-height:16px;font-weight:400;color:#000;white-space:pre;-webkit-text-stroke:0.2px #000">25</div>
<div style="position:absolute;left:746.09px;top:277.46px;font-family:'Liberation Sans',sans-serif;font-size:16px;line-height:16px;font-weight:400;color:#000;white-space:pre;-webkit-text-stroke:0.2px #000">6</div>
<div style="position:absolute;left:822.50px;top:277.46px;font-family:'Liberation Sans',sans-serif;font-size:16px;line-height:16px;font-weight:400;color:#000;white-space:pre;-webkit-text-stroke:0.2px #000">37500</div>
<div style="position:absolute;left:495.41px;top:300.46px;font-family:'Liberation Sans',sans-serif;font-size:16px;line-height:16px;font-weight:400;color:#000;white-space:pre;-webkit-text-stroke:0.2px #000">1650</div>
<div style="position:absolute;left:625.20px;top:300.46px;font-family:'Liberation Sans',sans-serif;font-size:16px;line-height:16px;font-weight:400;color:#000;white-space:pre;-webkit-text-stroke:0.2px #000">24</div>
<div style="position:absolute;left:746.09px;top:300.46px;font-family:'Liberation Sans',sans-serif;font-size:16px;line-height:16px;font-weight:400;color:#000;white-space:pre;-webkit-text-stroke:0.2px #000">7</div>
<div style="position:absolute;left:822.50px;top:300.46px;font-family:'Liberation Sans',sans-serif;font-size:16px;line-height:16px;font-weight:400;color:#000;white-space:pre;-webkit-text-stroke:0.2px #000">39600</div>
<div style="position:absolute;left:495.41px;top:323.46px;font-family:'Liberation Sans',sans-serif;font-size:16px;line-height:16px;font-weight:400;color:#000;white-space:pre;-webkit-text-stroke:0.2px #000">1400</div>
<div style="position:absolute;left:625.20px;top:323.46px;font-family:'Liberation Sans',sans-serif;font-size:16px;line-height:16px;font-weight:400;color:#000;white-space:pre;-webkit-text-stroke:0.2px #000">26</div>
<div style="position:absolute;left:746.09px;top:323.46px;font-family:'Liberation Sans',sans-serif;font-size:16px;line-height:16px;font-weight:400;color:#000;white-space:pre;-webkit-text-stroke:0.2px #000">5</div>
<div style="position:absolute;left:822.50px;top:323.46px;font-family:'Liberation Sans',sans-serif;font-size:16px;line-height:16px;font-weight:400;color:#000;white-space:pre;-webkit-text-stroke:0.2px #000">36400</div>
<div style="position:absolute;left:495.41px;top:346.46px;font-family:'Liberation Sans',sans-serif;font-size:16px;line-height:16px;font-weight:400;color:#000;white-space:pre;-webkit-text-stroke:0.2px #000">1600</div>
<div style="position:absolute;left:625.20px;top:346.46px;font-family:'Liberation Sans',sans-serif;font-size:16px;line-height:16px;font-weight:400;color:#000;white-space:pre;-webkit-text-stroke:0.2px #000">24</div>
<div style="position:absolute;left:746.09px;top:346.46px;font-family:'Liberation Sans',sans-serif;font-size:16px;line-height:16px;font-weight:400;color:#000;white-space:pre;-webkit-text-stroke:0.2px #000">7</div>
<div style="position:absolute;left:822.50px;top:346.46px;font-family:'Liberation Sans',sans-serif;font-size:16px;line-height:16px;font-weight:400;color:#000;white-space:pre;-webkit-text-stroke:0.2px #000">38400</div>
<div style="position:absolute;left:495.41px;top:369.46px;font-family:'Liberation Sans',sans-serif;font-size:16px;line-height:16px;font-weight:400;color:#000;white-space:pre;-webkit-text-stroke:0.2px #000">1800</div>
<div style="position:absolute;left:625.20px;top:369.46px;font-family:'Liberation Sans',sans-serif;font-size:16px;line-height:16px;font-weight:400;color:#000;white-space:pre;-webkit-text-stroke:0.2px #000">23</div>
<div style="position:absolute;left:746.09px;top:369.46px;font-family:'Liberation Sans',sans-serif;font-size:16px;line-height:16px;font-weight:400;color:#000;white-space:pre;-webkit-text-stroke:0.2px #000">8</div>
<div style="position:absolute;left:822.50px;top:369.46px;font-family:'Liberation Sans',sans-serif;font-size:16px;line-height:16px;font-weight:400;color:#000;white-space:pre;-webkit-text-stroke:0.2px #000">41400</div>
<div style="position:absolute;left:625.20px;top:392.46px;font-family:'Liberation Sans',sans-serif;font-size:16px;line-height:16px;font-weight:400;color:#000;white-space:pre;-webkit-text-stroke:0.2px #000">26</div>
<div style="position:absolute;left:746.09px;top:392.46px;font-family:'Liberation Sans',sans-serif;font-size:16px;line-height:16px;font-weight:400;color:#000;white-space:pre;-webkit-text-stroke:0.2px #000">5</div>
<div style="position:absolute;left:822.50px;top:392.46px;font-family:'Liberation Sans',sans-serif;font-size:16px;line-height:16px;font-weight:400;color:#000;white-space:pre;-webkit-text-stroke:0.2px #000">37700</div>
<div style="position:absolute;left:625.20px;top:415.46px;font-family:'Liberation Sans',sans-serif;font-size:16px;line-height:16px;font-weight:400;color:#000;white-space:pre;-webkit-text-stroke:0.2px #000">25</div>
<div style="position:absolute;left:746.09px;top:415.46px;font-family:'Liberation Sans',sans-serif;font-size:16px;line-height:16px;font-weight:400;color:#000;white-space:pre;-webkit-text-stroke:0.2px #000">6</div>
<div style="position:absolute;left:822.50px;top:415.46px;font-family:'Liberation Sans',sans-serif;font-size:16px;line-height:16px;font-weight:400;color:#000;white-space:pre;-webkit-text-stroke:0.2px #000">38750</div>
<div style="position:absolute;left:244px;top:186px;width:110px;height:63px;background:#fff;border:1px solid #d6d6d6;border-bottom:none;box-sizing:border-box"></div>
<svg style="position:absolute;left:256px;top:194px;" width="34" height="24" viewBox="0 0 34 24"><rect x="2.5" y="2.5" width="21" height="17" fill="#efefef" stroke="#8c8c8c" stroke-width="1" stroke-dasharray="3 0.8"/><path d="M2.5 14L8.5 8L14 13.5" stroke="#8c8c8c" stroke-width="1" fill="none"/><circle cx="18" cy="7" r="1.3" fill="#8c8c8c"/><path d="M23.5 8.5C24.5 8 25 8.5 24.5 9.5L14.5 19.5L12 17.5Z" fill="#d6d6d6" stroke="#9a9a9a" stroke-width="0.8"/><path d="M12 17.5C9 18 8.5 21 6 22C10 22.5 13.5 22 14.5 19.5Z" fill="#c4c4c4" stroke="#9a9a9a" stroke-width="0.8"/><path d="M27 10.5L29.5 13L32 10.5" stroke="#a0a0a0" stroke-width="1" fill="none"/></svg>
<svg style="position:absolute;left:308px;top:193px;" width="24" height="24" viewBox="0 0 24 24"><path d="M5.5 1V18.5H23M1 5.5H18.5V23M5.5 18.5L21 3" stroke="#3b3a39" stroke-width="1.1" fill="none"/></svg>
<div style="position:absolute;left:253.7px;top:224.04px;font-family:'Liberation Sans',sans-serif;font-size:12px;line-height:12px;font-weight:400;color:#a6a6a6;white-space:pre;transform:scaleX(0.8938);transform-origin:0 0;">Стиль</div>
<div style="position:absolute;left:294.5px;top:224.04px;font-family:'Liberation Sans',sans-serif;font-size:12px;line-height:12px;font-weight:400;color:#262626;white-space:pre;transform:scaleX(0.9461);transform-origin:0 0;">Обрезать</div>
<div style="position:absolute;left:244px;top:264px;width:179px;height:303px;background:#fff;border:1px solid #c8c8c8;box-sizing:border-box;box-shadow:1px 1px 3px rgba(0,0,0,0.15)"></div>
<div style="position:absolute;left:283.6px;top:273.54px;font-family:'Liberation Sans',sans-serif;font-size:12px;line-height:12px;font-weight:400;color:#262626;white-space:pre;transform:scaleX(0.9402);transform-origin:0 0;">В<u>ы</u>резать</div>
<div style="position:absolute;left:283.6px;top:302.34px;font-family:'Liberation Sans',sans-serif;font-size:12px;line-height:12px;font-weight:400;color:#262626;white-space:pre;transform:scaleX(0.9903);transform-origin:0 0;"><u>К</u>опировать</div>
<div style="position:absolute;left:284.1px;top:332.24px;font-family:'Liberation Sans',sans-serif;font-size:12px;line-height:12px;font-weight:700;color:#262626;white-space:pre;transform:scaleX(0.9621);transform-origin:0 0;">Параметры вставки:</div>
<div style="position:absolute;left:283.6px;top:427.34px;font-family:'Liberation Sans',sans-serif;font-size:12px;line-height:12px;font-weight:400;color:#262626;white-space:pre;transform:scaleX(0.9446);transform-origin:0 0;"><u>В</u>ставить название...</div>
<div style="position:absolute;left:278px;top:448px;width:143px;height:1px;background:#e1dfdd"></div>
<div style="position:absolute;left:283.6px;top:458.54px;font-family:'Liberation Sans',sans-serif;font-size:12px;line-height:12px;font-weight:400;color:#262626;white-space:pre;transform:scaleX(0.9764);transform-origin:0 0;"><u>Г</u>раницы и заливка...</div>
<div style="position:absolute;left:283.6px;top:486.04px;font-family:'Liberation Sans',sans-serif;font-size:12px;line-height:12px;font-weight:400;color:#262626;white-space:pre;transform:scaleX(0.9750);transform-origin:0 0;"><u>Р</u>исунок...</div>
<div style="position:absolute;left:278px;top:507px;width:143px;height:1px;background:#e1dfdd"></div>
<div style="position:absolute;left:283.6px;top:517.24px;font-family:'Liberation Sans',sans-serif;font-size:12px;line-height:12px;font-weight:400;color:#262626;white-space:pre;transform:scaleX(0.9694);transform-origin:0 0;">Сс<u>ы</u>лка</div>
<div style="position:absolute;left:283.6px;top:545.24px;font-family:'Liberation Sans',sans-serif;font-size:12px;line-height:12px;font-weight:400;color:#262626;white-space:pre;transform:scaleX(0.9828);transform-origin:0 0;">Создать примеча<u>н</u>ие</div>
<svg style="position:absolute;left:259px;top:270px;" width="14" height="18" viewBox="0 0 14 18"><path d="M3 1L9.5 12M11 1L4.5 12" stroke="#3b3a39" stroke-width="1" fill="none"/><circle cx="3.3" cy="14.3" r="2" fill="none" stroke="#2b7cd3" stroke-width="1.2"/><circle cx="10.7" cy="14.3" r="2" fill="none" stroke="#2b7cd3" stroke-width="1.2"/></svg>
<svg style="position:absolute;left:257px;top:298px;" width="18" height="17" viewBox="0 0 18 17"><path d="M8 2.5V1.5H1.5V14.5H5.5" stroke="#3b3a39" stroke-width="1.1" fill="none"/><path d="M6.5 4.5H12L16.5 9V16H6.5Z" fill="#fff" stroke="#3b3a39" stroke-width="1.1"/><path d="M11.5 4.5V9.5H16.5" fill="none" stroke="#3b3a39" stroke-width="0.9"/><path d="M9 11.5H14M9 13.8H14" fill="none" stroke="#6a6a6a" stroke-width="0.7"/></svg>
<svg style="position:absolute;left:259px;top:326px;" width="16" height="18" viewBox="0 0 16 18"><path d="M1.5 3.5H4V2H10V3.5H12.5V16.5H1.5Z" fill="#ececec" stroke="#b8b8b8"/><path d="M4 5.5V2.5H6A1 1 0 0 1 8 2.5H10V5.5Z" fill="#f2f2f2" stroke="#b8b8b8"/><rect x="7.5" y="8.5" width="7" height="8" fill="#f0f0f0" stroke="#8a8a8a" stroke-dasharray="1 0.6"/></svg>
<svg style="position:absolute;left:284px;top:355px;" width="23" height="25" viewBox="0 0 23 25"><path d="M1.5 4.5H5V3H13V4.5H16.5V23.5H1.5Z" fill="#ececec" stroke="#b8b8b8"/><path d="M4.5 7V3.5H7.5A1.5 1.5 0 0 1 10.5 3.5H13.5V7Z" fill="#f2f2f2" stroke="#b8b8b8"/><rect x="10.5" y="11.5" width="10" height="12" fill="#f0f0f0" stroke="#7a7a7a" stroke-dasharray="1.2 0.6"/></svg>
<svg style="position:absolute;left:257px;top:423px;" width="18" height="17" viewBox="0 0 18 17"><path d="M1.5 11V1.5H15.5V11Z" fill="#fff" stroke="#3b3a39" stroke-width="1.1"/><path d="M2 10.5L6 5.5L9 8.5L11 6.5L15 10.5Z" fill="#6e9be0"/><circle cx="12.5" cy="4" r="1.2" fill="#f06a22"/><path d="M1 15H16" stroke="#e81123" stroke-width="1.2" stroke-dasharray="2 1.2"/></svg>
<svg style="position:absolute;left:259px;top:455px;" width="14" height="17" viewBox="0 0 14 17"><path d="M1 1H8.5L12.5 5V15.5H1Z" fill="#fff" stroke="#3b3a39" stroke-width="1.1"/><path d="M8.5 1V5H12.5" stroke="#3b3a39" fill="none"/><path d="M3.2 4.5H7.5V7H10.3V13.3H3.2Z" fill="#fff" stroke="#f7662c" stroke-width="1.8"/></svg>
<svg style="position:absolute;left:254px;top:479px;" width="24" height="24" viewBox="0 0 24 24"><path d="M4.4 10.1L8.7 6.1L13.2 9.2L8.7 14.1Z" fill="#fff" stroke="#3b3a39" stroke-width="1.1" stroke-linejoin="round"/><path d="M8.4 6.3V5A1.05 1.05 0 0 1 10.5 5V9.4" stroke="#3b3a39" stroke-width="1.1" fill="none"/><path d="M12.6 7.6C14 7.6 14.6 9 14.6 11" stroke="#2b7cd3" stroke-width="1.4" fill="none"/><path d="M19.6 10.3L14.2 15.8L15.4 17L20.2 11.2Z" fill="#fff" stroke="#3b3a39" stroke-width="1"/><path d="M14.2 15.8C12 17 10 18 7.3 18.8C10 20.2 13.2 20 15.4 17Z" fill="#2b7cd3"/></svg>
<svg style="position:absolute;left:257px;top:515px;" width="18" height="14" viewBox="0 0 18 14"><path d="M7 8.2H4.5A3.2 3.2 0 0 1 4.5 1.8H8A3.2 3.2 0 0 1 10.5 7" stroke="#3b3a39" stroke-width="1.1" fill="none"/><path d="M11 5.8H13.5A3.2 3.2 0 0 1 13.5 12.2H10A3.2 3.2 0 0 1 7.5 7" stroke="#3b3a39" stroke-width="1.1" fill="none"/></svg>
<svg style="position:absolute;left:257px;top:541px;" width="17" height="17" viewBox="0 0 17 17"><path d="M9.5 3.5H15.5V12.5H8L4.5 15.5V12.5H3.5V7.5" stroke="#3b3a39" stroke-width="1.1" fill="none" stroke-linejoin="miter"/><path d="M4.8 1V8.5M1 4.8H8.5" stroke="#1f4e8c" stroke-width="1.1"/></svg>
<div style="position:absolute;left:398px;top:516px;width:1px;height:13px;background:#e1dfdd"></div>
<svg style="position:absolute;left:406px;top:516px;" width="8" height="12" viewBox="0 0 8 12"><path d="M1.5 1.5L6 6L1.5 10.5" stroke="#3b3a39" stroke-width="1.1" fill="none"/></svg>
<div style="position:absolute;left:421px;top:386px;width:157px;height:92px;background:#fff;border:1px solid #c8c8c8;box-sizing:border-box;box-shadow:1px 1px 3px rgba(0,0,0,0.15)"></div>
<div style="position:absolute;left:460px;top:426.04px;font-family:'Liberation Sans',sans-serif;font-size:12px;line-height:12px;font-weight:400;color:#262626;white-space:pre;transform:scaleX(0.9864);transform-origin:0 0;"><u>О</u>ткрыть</div>
<div style="position:absolute;left:455px;top:447px;width:121px;height:1px;background:#e1dfdd"></div>
<div style="position:absolute;left:460px;top:456.34px;font-family:'Liberation Sans',sans-serif;font-size:12px;line-height:12px;font-weight:400;color:#262626;white-space:pre;transform:scaleX(0.9685);transform-origin:0 0;">Преобразоват<u>ь</u>...</div>
<div style="position:absolute;left:240px;top:384px;width:181px;height:34px;border:3px solid #ff0000;border-radius:8px;box-sizing:border-box;box-shadow:0 0 0 1px #fff, inset 0 0 0 1px #fff"></div>
<div style="position:absolute;left:244px;top:388px;width:173px;height:26px;background:#d4d2d0;border-radius:5px;box-shadow:inset 2px 2px 2px #8a8886"></div>
<div style="position:absolute;left:419px;top:385px;width:164px;height:36px;border:3px solid #ff0000;border-radius:8px;box-sizing:border-box;box-shadow:0 0 0 1px #fff, inset 0 0 0 1px #fff"></div>
<div style="position:absolute;left:423px;top:389px;width:156px;height:28px;background:#d4d2d0;border-radius:5px;box-shadow:inset 2px 2px 2px #8a8886"></div>
<svg style="position:absolute;left:406px;top:396px;" width="8" height="12" viewBox="0 0 8 12"><path d="M1.5 1.5L6 6L1.5 10.5" stroke="#3b3a39" stroke-width="1.1" fill="none"/></svg>
<div style="position:absolute;left:284.1px;top:395.74px;font-family:'Liberation Sans',sans-serif;font-size:12px;line-height:12px;font-weight:400;color:#262626;white-space:pre;transform:scaleX(0.9621);transform-origin:0 0;">Об<u>ъ</u>ект Worksheet</div>
<div style="position:absolute;left:459.9px;top:398.04px;font-family:'Liberation Sans',sans-serif;font-size:12px;line-height:12px;font-weight:400;color:#262626;white-space:pre;transform:scaleX(0.9643);transform-origin:0 0;"><u>П</u>равка</div>
<svg style="position:absolute;left:192px;top:379px;" width="50" height="50" viewBox="0 0 50 50"><defs><radialGradient id="ga" cx="50%" cy="50%" r="50%"><stop offset="0" stop-color="#f47a48"/><stop offset="0.7" stop-color="#f37040"/><stop offset="1" stop-color="#f5612f"/></radialGradient></defs><circle cx="25" cy="25.5" r="23" fill="rgba(0,0,0,0.18)"/><circle cx="25" cy="25" r="22.8" fill="#ff1e00"/><circle cx="25" cy="25" r="19.2" fill="url(#ga)"/><ellipse cx="25" cy="38.5" rx="8" ry="5" fill="#fbb98c" opacity="0.9"/><ellipse cx="25" cy="10.5" rx="9" ry="4" fill="#f8a57a" opacity="0.8"/><path d="M24 12H30.5V37H24V20C22 21.5 20.2 22.4 17.8 23V17.3C20.5 16.5 22.5 14.5 24 12Z" fill="#fff" stroke="#1b1b1b" stroke-width="2.6" paint-order="stroke fill" stroke-linejoin="round"/></svg>
<svg style="position:absolute;left:581.5px;top:378px;" width="50" height="50" viewBox="0 0 50 50"><defs><radialGradient id="gb" cx="50%" cy="50%" r="50%"><stop offset="0" stop-color="#f47a48"/><stop offset="0.7" stop-color="#f37040"/><stop offset="1" stop-color="#f5612f"/></radialGradient></defs><circle cx="25" cy="25.5" r="23" fill="rgba(0,0,0,0.18)"/><circle cx="25" cy="25" r="22.8" fill="#ff1e00"/><circle cx="25" cy="25" r="19.2" fill="url(#gb)"/><ellipse cx="25" cy="38.5" rx="8" ry="5" fill="#fbb98c" opacity="0.9"/><ellipse cx="25" cy="10.5" rx="9" ry="4" fill="#f8a57a" opacity="0.8"/><text x="25" y="37.2" text-anchor="middle" font-family="Liberation Sans" font-weight="700" font-size="35" fill="#fff" stroke="#1b1b1b" stroke-width="3" paint-order="stroke fill" stroke-linejoin="round">2</text></svg>
</body></html>
